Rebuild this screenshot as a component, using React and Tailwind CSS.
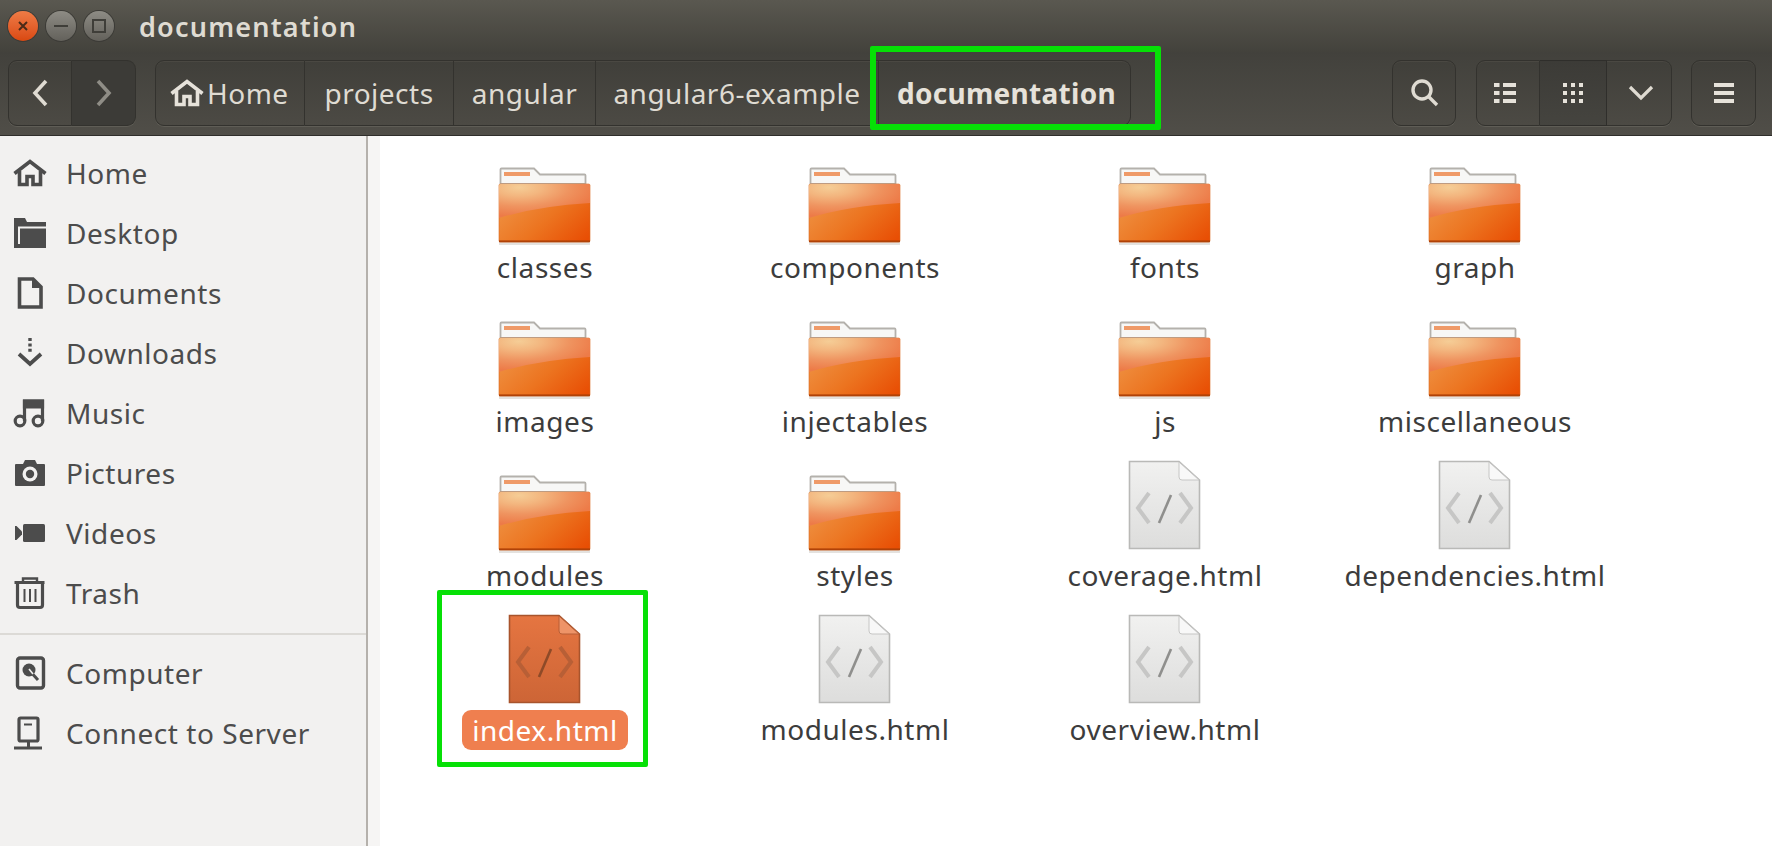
import React from "react";

const FONT = "font-['Noto_Sans','DejaVu_Sans',sans-serif]";

function Folder() {
  return (
    <svg width="94" height="78" viewBox="0 0 94 78" className="-mb-[2px]">
      <defs>
        <radialGradient id="fh" cx="0.22" cy="0.1" r="0.85">
          <stop offset="0" stopColor="#f5cd96" />
          <stop offset="0.3" stopColor="#f3b67f" />
          <stop offset="0.65" stopColor="#ef9460" />
          <stop offset="1" stopColor="#ed7b48" />
        </radialGradient>
        <linearGradient id="fb" x1="0" y1="0.2" x2="1" y2="0.9">
          <stop offset="0" stopColor="#ef9648" />
          <stop offset="0.55" stopColor="#ec7420" />
          <stop offset="1" stopColor="#e84e04" />
        </linearGradient>
      </defs>
      <path d="M2.5 17V2.5a1 1 0 0 1 1-1H36l6 6h44.5a1 1 0 0 1 1 1V17z" fill="#f7f7f6" stroke="#b4b1ac" strokeWidth="1.8" />
      <rect x="6" y="5" width="26" height="4" fill="#ef9a68" />
      <rect x="1" y="75" width="91" height="3" fill="#e4e2df" />
      <rect x="1" y="17" width="91" height="58" rx="1.5" fill="url(#fb)" stroke="#d9691f" strokeWidth="0.6" />
      <path d="M1 18.5A1.5 1.5 0 0 1 2.5 17h88a1.5 1.5 0 0 1 1.5 1.5V36Q40 39 1 51z" fill="url(#fh)" />
      <rect x="1" y="73.4" width="91" height="1.8" fill="#b04208" />
    </svg>
  );
}

function HtmlFile({ selected }) {
  const fillTop = selected ? "#e57541" : "#f1f1f0";
  const fillBottom = selected ? "#cd6536" : "#dddddc";
  const border = selected ? "#a8542c" : "#b9b9b7";
  const soft = selected ? "#b85f36" : "#c6c6c5";
  const slash = selected ? "#8e4a28" : "#8f8f8d";
  const id = selected ? "fileSel" : "fileNorm";
  return (
    <svg width="73" height="90" viewBox="0 0 73 90" className="mb-[1px] mr-[2px]">
      <defs>
        <linearGradient id={id} x1="0" y1="0" x2="0" y2="1">
          <stop offset="0" stopColor={fillTop} />
          <stop offset="1" stopColor={fillBottom} />
        </linearGradient>
      </defs>
      <path d="M1.5 1.5H51L71.5 20V88.5H1.5z" fill={`url(#${id})`} stroke={border} strokeWidth="1.6" />
      <path d="M51 2V17a3 3 0 0 0 3 3H71z" fill={selected ? "#ee9468" : "#f8f8f8"} stroke={soft} strokeWidth="1" />
      <path d="M21 33L10 48L21 63" fill="none" stroke={soft} strokeWidth="4" />
      <path d="M52 33L63 48L52 63" fill="none" stroke={soft} strokeWidth="4" />
      <path d="M43 35L31 63" fill="none" stroke={slash} strokeWidth="2.6" />
    </svg>
  );
}

const G = "#4c4c4c";

const sideIcons = {
  home: (
    <svg width="34" height="28" viewBox="0 0 34 28" fill="none" stroke={G} strokeWidth="3.6">
      <path d="M1.5 14.5L17 2.5L32.5 14.5" />
      <path d="M6.5 12V25.5H14V17.5H20V25.5H27.5V12" />
    </svg>
  ),
  desktop: (
    <svg width="34" height="32" viewBox="0 0 34 32">
      <path d="M1 1H12L14 5H33V31H1z" fill={G} />
      <path d="M5 9.5H33V11.5H7V27H5z" fill="#f2f1f0" />
    </svg>
  ),
  doc: (
    <svg width="34" height="32" viewBox="0 0 34 32" fill="none" stroke={G} strokeWidth="3.6">
      <path d="M6.5 2H20L28 10V30H6.5z" />
      <path d="M20 2V10H28" fill={G} strokeWidth="2" />
    </svg>
  ),
  download: (
    <svg width="34" height="32" viewBox="0 0 34 32" fill="none" stroke={G}>
      <path d="M17 1V17" strokeWidth="3.4" strokeDasharray="3 2.4" />
      <path d="M6 17L17 27L28 17" strokeWidth="3.8" />
    </svg>
  ),
  music: (
    <svg width="34" height="30" viewBox="0 0 34 30" fill="none" stroke={G} strokeWidth="3.2">
      <path d="M11.5 23V3H29.5V23" />
      <path d="M11.5 3H29.5V9H11.5z" fill={G} />
      <circle cx="7" cy="23" r="4.8" />
      <circle cx="25" cy="23" r="4.8" />
    </svg>
  ),
  camera: (
    <svg width="34" height="28" viewBox="0 0 34 28">
      <path d="M3 5H10L12 1H22L24 5H31a1 1 0 0 1 1 1V26a1 1 0 0 1-1 1H3a1 1 0 0 1-1-1V6a1 1 0 0 1 1-1z" fill={G} />
      <circle cx="17" cy="15" r="7.5" fill="#f2f1f0" />
      <circle cx="17" cy="15" r="4.2" fill={G} />
    </svg>
  ),
  video: (
    <svg width="34" height="22" viewBox="0 0 34 22">
      <rect x="10" y="2" width="22" height="18" rx="1.5" fill={G} />
      <path d="M2 4V18H3.5L9 12.5V9.5L3.5 4z" fill={G} />
    </svg>
  ),
  trash: (
    <svg width="34" height="34" viewBox="0 0 34 34" fill="none" stroke={G}>
      <path d="M1.5 6.5H31.5" strokeWidth="3" />
      <path d="M10 6V2.5H24V6" strokeWidth="2.4" />
      <path d="M4.5 7V29a2.5 2.5 0 0 0 2.5 2.5H27a2.5 2.5 0 0 0 2.5-2.5V7" strokeWidth="3.2" />
      <path d="M11.5 13V26M17 13V26M22.5 13V26" strokeWidth="2" />
    </svg>
  ),
  computer: (
    <svg width="34" height="34" viewBox="0 0 34 34" fill="none">
      <rect x="4.5" y="2" width="26" height="30" rx="2.5" stroke={G} strokeWidth="3.4" />
      <circle cx="16" cy="14" r="6.5" fill={G} />
      <path d="M16 14L25 24" stroke={G} strokeWidth="3" />
      <path d="M16 13L20 18" stroke="#f2f1f0" strokeWidth="1.6" />
    </svg>
  ),
  server: (
    <svg width="34" height="34" viewBox="0 0 34 34" fill="none" stroke={G}>
      <rect x="6" y="2" width="19" height="23" rx="1.5" strokeWidth="3.2" />
      <path d="M11 8.5H19" strokeWidth="2" />
      <path d="M15.5 25V31" strokeWidth="3" />
      <path d="M1 32H29" strokeWidth="3" />
    </svg>
  ),
};

function SideRow({ icon, label }) {
  return (
    <div className="flex h-[60px] items-center pl-[13px]">
      <div className="flex w-[34px] justify-center">{sideIcons[icon]}</div>
      <span className="ml-[19px] text-[28px] leading-none tracking-[0.55px] text-[#4c4c4c]">{label}</span>
    </div>
  );
}

function FileItem({ name, kind, selected }) {
  return (
    <div className="flex h-[137px] flex-col items-center">
      <div className="flex h-[92px] items-end">
        {kind === "folder" ? <Folder /> : <HtmlFile selected={selected} />}
      </div>
      <div
        className={
          "flex h-[40px] items-center rounded-[9px] text-[28px] leading-none tracking-[0.55px] " +
          (selected ? "mt-[5px] bg-[#ef7f4f] px-[10px] text-white" : "mt-[4px] px-[8px] text-[#3c3c3c]")
        }
      >
        {name}
      </div>
    </div>
  );
}

const btn =
  "flex h-[66px] items-center justify-center border border-[#33322e] bg-gradient-to-b from-[#403f3a] to-[#4c4a44] shadow-[0_1px_0_#5f5d56,inset_0_1px_0_#4a4842]";

const files = [
  ["classes", "folder"],
  ["components", "folder"],
  ["fonts", "folder"],
  ["graph", "folder"],
  ["images", "folder"],
  ["injectables", "folder"],
  ["js", "folder"],
  ["miscellaneous", "folder"],
  ["modules", "folder"],
  ["styles", "folder"],
  ["coverage.html", "file"],
  ["dependencies.html", "file"],
  ["index.html", "file", true],
  ["modules.html", "file"],
  ["overview.html", "file"],
];

const crumbs = [
  ["projects", "w-[149px]"],
  ["angular", "w-[142px]"],
  ["angular6-example", "w-[283px]"],
];

export default function App() {
  return (
    <div className={"relative flex h-[846px] w-[1772px] flex-col overflow-hidden bg-white " + FONT}>
      {/* title bar */}
      <div className="flex h-[52px] shrink-0 items-center bg-gradient-to-b from-[#5a5850] to-[#43423c] pl-[8px]">
        <div className="flex h-[30px] w-[30px] items-center justify-center rounded-full bg-gradient-to-b from-[#ef7b45] to-[#d9480f] shadow-[0_0_0_1px_#3c3b37]">
          <svg width="12" height="12" viewBox="0 0 12 12" fill="none" stroke="#4a2a18" strokeWidth="2">
            <path d="M2 2L10 10M10 2L2 10" />
          </svg>
        </div>
        <div className="ml-[8px] flex h-[30px] w-[30px] items-center justify-center rounded-full bg-gradient-to-b from-[#8e8c85] to-[#63615b] shadow-[0_0_0_1px_#3c3b37]">
          <div className="h-[2px] w-[14px] bg-[#3f3e39]" />
        </div>
        <div className="ml-[8px] flex h-[30px] w-[30px] items-center justify-center rounded-full bg-gradient-to-b from-[#8e8c85] to-[#63615b] shadow-[0_0_0_1px_#3c3b37]">
          <div className="h-[14px] w-[14px] border-2 border-[#3f3e39]" />
        </div>
        <span className="ml-[25px] text-[27px] font-semibold leading-none tracking-[1.2px] text-[#dfdbd2]">documentation</span>
      </div>

      {/* toolbar */}
      <div className="flex h-[84px] shrink-0 items-start border-b border-[#2f2e2b] bg-gradient-to-b from-[#42413c] to-[#504e48] pl-[8px] pr-[16px] pt-[8px]">
        <div className="flex w-[128px]">
          <div className={btn + " w-[64px] rounded-l-[9px]"}>
            <svg width="18" height="28" viewBox="0 0 18 28" fill="none" stroke="#dfdbd2" strokeWidth="3.6">
              <path d="M15 2L4 14L15 26" />
            </svg>
          </div>
          <div className="flex h-[66px] w-[64px] items-center justify-center rounded-r-[9px] border border-l-0 border-[#33322e] bg-[#3c3b37] shadow-[0_1px_0_#5f5d56]">
            <svg width="18" height="28" viewBox="0 0 18 28" fill="none" stroke="#8f8d86" strokeWidth="3.6">
              <path d="M3 2L14 14L3 26" />
            </svg>
          </div>
        </div>

        <div className="ml-[19px] flex">
          <div className={btn + " w-[150px] justify-start rounded-l-[9px] pl-[14px]"}>
            <svg width="34" height="28" viewBox="0 0 34 28" fill="none" stroke="#e6e2da" strokeWidth="3.6">
              <path d="M1.5 14.5L17 2.5L32.5 14.5" />
              <path d="M6.5 12V25.5H14V17.5H20V25.5H27.5V12" />
            </svg>
            <span className="ml-[3px] text-[28px] leading-none tracking-[0.5px] text-[#dfdbd2]">Home</span>
          </div>
          {crumbs.map(([t, w]) => (
            <div key={t} className={btn + " border-l-0 " + w}>
              <span className="text-[28px] leading-none tracking-[0.5px] text-[#dfdbd2]">{t}</span>
            </div>
          ))}
          <div className={btn + " w-[252px] rounded-r-[9px] border-l-0 pl-[4px]"}>
            <span className="text-[28px] font-bold leading-none tracking-[0.3px] text-[#e6e2da]">documentation</span>
          </div>
        </div>

        <div className={btn + " ml-auto w-[64px] rounded-[9px]"}>
          <svg width="30" height="30" viewBox="0 0 30 30" fill="none" stroke="#dfdbd2">
            <circle cx="13" cy="12" r="9" strokeWidth="3.4" />
            <path d="M19 18L28 27" strokeWidth="3.4" />
          </svg>
        </div>

        <div className="ml-[20px] flex">
          <div className={btn + " w-[64px] rounded-l-[9px] pr-[6px]"}>
            <svg width="24" height="22" viewBox="0 0 24 22" fill="#e6e2da">
              <rect x="1" y="1" width="5.5" height="4" />
              <rect x="10" y="1" width="13" height="4" />
              <rect x="1" y="9" width="5.5" height="4" />
              <rect x="10" y="9" width="13" height="4" />
              <rect x="1" y="17" width="5.5" height="4" />
              <rect x="10" y="17" width="13" height="4" />
            </svg>
          </div>
          <div className="flex h-[66px] w-[67px] items-center justify-center border border-l-0 border-[#2f2e2b] bg-gradient-to-b from-[#3c3b37] to-[#45443f] shadow-[0_1px_0_#5f5d56]">
            <svg width="22" height="22" viewBox="0 0 22 22" fill="#e6e2da">
              {[1, 9, 17].flatMap((y) =>
                [1, 9, 17].map((x) => <rect key={x + "-" + y} x={x} y={y} width="4" height="4" />)
              )}
            </svg>
          </div>
          <div className={btn + " w-[65px] rounded-r-[9px] border-l-0 pl-[4px]"}>
            <svg width="26" height="18" viewBox="0 0 26 18" fill="none" stroke="#dfdbd2" strokeWidth="3.2">
              <path d="M2 3L13 14L24 3" />
            </svg>
          </div>
        </div>

        <div className={btn + " ml-[19px] w-[65px] rounded-[9px]"}>
          <svg width="22" height="22" viewBox="0 0 22 22" fill="#e6e2da">
            <rect x="1" y="1" width="20" height="4" />
            <rect x="1" y="9" width="20" height="4" />
            <rect x="1" y="17" width="20" height="4" />
          </svg>
        </div>
      </div>

      {/* body */}
      <div className="flex min-h-0 flex-1">
        <aside className="w-[368px] shrink-0 border-r-2 border-[#b5b1ac] bg-[#f2f1f0] pt-[7px]">
          <SideRow icon="home" label="Home" />
          <SideRow icon="desktop" label="Desktop" />
          <SideRow icon="doc" label="Documents" />
          <SideRow icon="download" label="Downloads" />
          <SideRow icon="music" label="Music" />
          <SideRow icon="camera" label="Pictures" />
          <SideRow icon="video" label="Videos" />
          <SideRow icon="trash" label="Trash" />
          <div className="mb-[8px] mt-[10px] h-[2px] bg-[#dcdad6]" />
          <SideRow icon="computer" label="Computer" />
          <SideRow icon="server" label="Connect to Server" />
        </aside>
        <div className="w-[12px] shrink-0 bg-[#f6f5f4]" />
        <main className="grid flex-1 grid-cols-[repeat(4,310px)] content-start gap-y-[17px] pl-[10px] pt-[15px]">
          {files.map(([n, k, s]) => (
            <FileItem key={n} name={n} kind={k} selected={s} />
          ))}
        </main>
      </div>

      {/* annotation overlays */}
      <div className="pointer-events-none absolute left-[870px] top-[46px] h-[84px] w-[291px] rounded-[2px] border-[6px] border-[#06e006]" />
      <div className="pointer-events-none absolute left-[437px] top-[590px] h-[177px] w-[211px] rounded-[2px] border-[5px] border-[#06e006]" />
    </div>
  );
}
